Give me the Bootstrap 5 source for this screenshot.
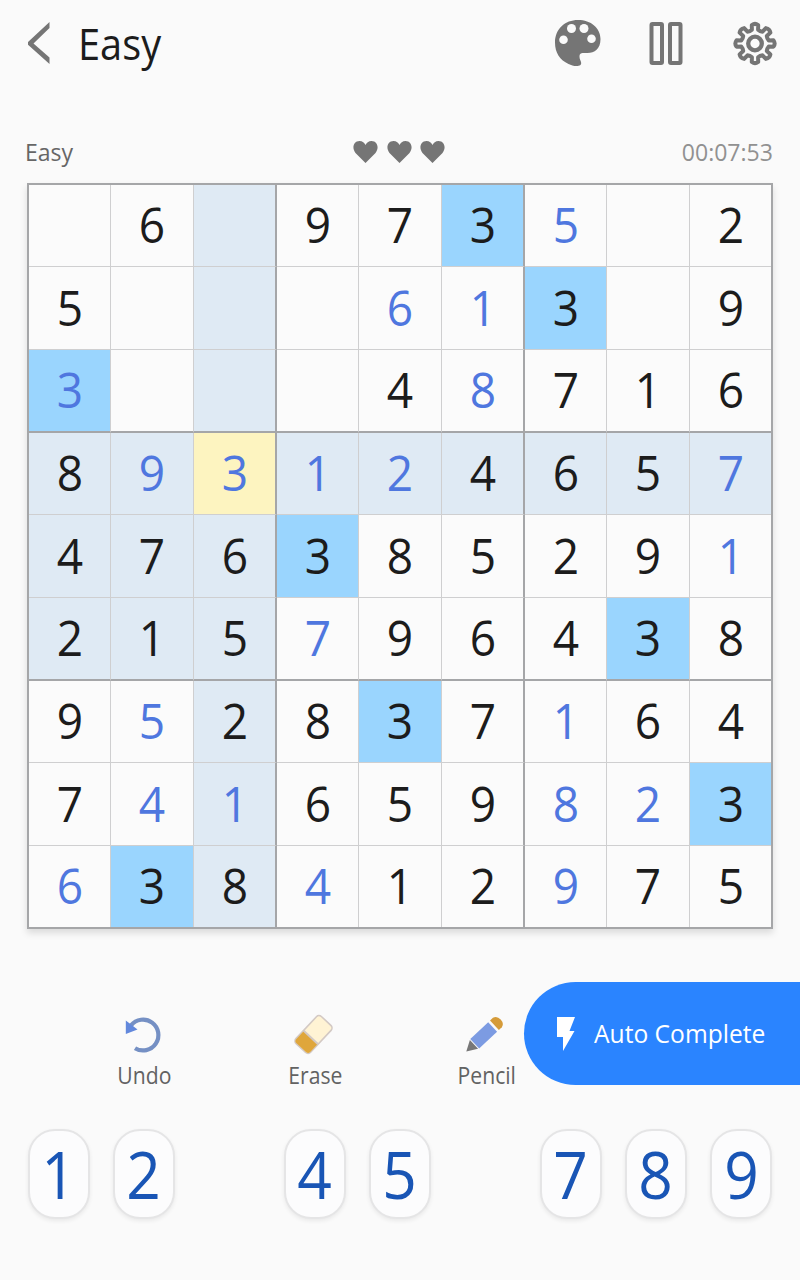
<!DOCTYPE html>
<html lang="en">
<head>
<meta charset="utf-8">
<meta name="viewport" content="width=device-width, initial-scale=1">
<title>Sudoku</title>
<link href="https://cdn.jsdelivr.net/npm/bootstrap@5.3.0/dist/css/bootstrap.min.css" rel="stylesheet">
<style>
  body { background: #fafafa; font-family: "Open Sans", "Noto Sans", sans-serif; font-weight: 380; color: #1c1c1c; width: 800px; height: 1280px; overflow: hidden; }
  svg { display: block; flex: none; }
  .narrow { display: inline-block; white-space: nowrap; transform: scaleX(.94); transform-origin: left center; }
  .topbar { height: 88px; padding: 0 23px 0 27px; }
  .topbar h1 { font-size: 43px; line-height: 60px; font-weight: 400; margin: 0 0 0 24px; }
  .topbar h1 .narrow { transform: scaleX(.925); }
  .actions { gap: 47px; }
  .status { height: 56px; margin-top: 39px; padding: 0 27px 6px 25px; font-size: 24.5px; color: #666; }
  .status .time { color: #919191; transform-origin: right center; }
  .hearts { gap: 7.5px; margin-left: -1px; }
  .board { width: 746px; height: 746px; margin-left: 27px; border: 2px solid #a5a6a8; display: grid;
    grid-template-columns: 82px 83px 83px 82px 83px 83px 82px 83px 81px;
    grid-template-rows: 82px 83px 83px 82px 83px 83px 82px 83px 81px; box-shadow: 0 4px 7px rgba(0,0,0,.13); }
  .cell { border: 0 solid #cfcfd0; border-right-width: 1px; border-bottom-width: 1px; font-size: 48.5px; line-height: 1; background: #fbfbfb; }
  .cell span { transform: scaleX(.95); margin-top: -2px; }
  .cell.box-right { border-right: 2px solid #a5a6a8; }
  .cell.box-bottom { border-bottom: 2px solid #a5a6a8; }
  .cell.last-col { border-right: 0; }
  .cell.last-row { border-bottom: 0; }
  .cell.area { background: #dfeaf4; }
  .cell.same { background: #9ad5fe; }
  .cell.picked { background: #fdf4c0; }
  .cell.entered { color: #4f77df; }
  .tools { height: 200px; padding-left: 59px; }
  .tool { width: 171px; padding-top: 85px; font-size: 23px; line-height: 32px; color: #626262; }
  .tool .narrow { transform: scaleX(.92); transform-origin: center; margin-top: 3px; }
  .auto { right: 0; top: 53px; width: 276px; height: 103px; border-radius: 52px 0 0 52px; background: #2a84ff; color: #fff; font-size: 25.5px; padding-left: 33px; border: 0; }
  .auto .narrow { margin-left: 19px; transform: scaleX(.965); }
  .keys { display: grid; grid-template-columns: repeat(9, 1fr); padding: 0 16px; justify-items: center; }
  .key { width: 62px; height: 90px; border: 2px solid #e5e5e6; border-radius: 27px; background: #fcfcfd; color: #1955b5; font-size: 65px; font-weight: 400; line-height: 1; box-shadow: 0 2px 4px rgba(0,0,0,.07); }
  .key span { transform: scaleX(.93); }
</style>
</head>
<body>
<header class="topbar d-flex align-items-center">
  <svg width="27" height="44" viewBox="0 0 27 44"><path d="M22.500 0v6L6.500 21.500 22.500 35.500v6.500L1 22.800v-2.800Z" fill="#757575"/></svg>
  <h1><span class="narrow">Easy</span></h1>
  <div class="actions d-flex align-items-center ms-auto">
    <svg width="47" height="48" viewBox="0 0 47 48"><path d="M24 0C37 0 46.500 8 46.500 19c0 10-6 14-13 14-5 0-8-.5-8 3.500 0 4 3 6 1 8.500-3 2-8 1-12-1C6 40 1 33 1 22.500 1 9 11 0 24 0Z" fill="#757575"/><g fill="#fafafa"><circle cx="9.500" cy="19.700" r="4.300"/><circle cx="17.500" cy="8.500" r="4.500"/><circle cx="30" cy="8.500" r="4.500"/><circle cx="37.500" cy="18.700" r="4.300"/></g></svg>
    <svg width="36" height="46" viewBox="0 0 36 46"><g fill="none" stroke="#757575" stroke-width="4"><rect x="3.500" y="3" width="10.500" height="39" rx="1"/><rect x="22" y="3" width="10.500" height="39" rx="1"/></g></svg>
    <svg id="gear" width="46" height="46" viewBox="-24 -22.500 46 46"><path fill="none" stroke="#757575" stroke-width="4" stroke-linejoin="round"/><circle r="6.800" fill="none" stroke="#757575" stroke-width="4.300"/></svg>
  </div>
</header>
<div class="status d-flex align-items-center position-relative">
  <span class="narrow">Easy</span>
  <div class="hearts position-absolute start-50 translate-middle-x d-flex">
    <svg width="26" height="24" viewBox="0 0 26 24"><path d="M13 23 3 13C-1 8 1 1 7 1c3 0 5 2 6 4 1-2 3-4 6-4 6 0 8 7 4 12Z" fill="#757575"/></svg>
    <svg width="26" height="24" viewBox="0 0 26 24"><path d="M13 23 3 13C-1 8 1 1 7 1c3 0 5 2 6 4 1-2 3-4 6-4 6 0 8 7 4 12Z" fill="#757575"/></svg>
    <svg width="26" height="24" viewBox="0 0 26 24"><path d="M13 23 3 13C-1 8 1 1 7 1c3 0 5 2 6 4 1-2 3-4 6-4 6 0 8 7 4 12Z" fill="#757575"/></svg>
  </div>
  <span class="narrow time ms-auto">00:07:53</span>
</div>
<main class="board" id="board"></main>
<section class="tools d-flex position-relative">
  <div class="tool d-flex flex-column align-items-center">
    <svg width="44" height="42" viewBox="0 0 44 42"><path d="M8 11.400A15.400 15.400 0 1 1 12 34.200" fill="none" stroke="#7590c4" stroke-width="4.200"/><path d="M2.800 6.500v13.500L14.500 15.500Z" fill="#6288dc"/></svg>
    <span class="narrow">Undo</span>
  </div>
  <div class="tool d-flex flex-column align-items-center">
    <svg width="44" height="42" viewBox="0 0 44 42"><g transform="translate(19.500 20.500) rotate(-47)"><rect x="-18.500" y="-10" width="37" height="20" rx="3.500" fill="#fff3d4" stroke="#d3c9c4" stroke-width="1.600"/><path d="M-4-9.500h-11q-3 0-3 3V6.500q0 3 3 3h11Z" fill="#dfa63b"/><path d="M-4-10V10" stroke="#d3c9c4" stroke-width="2"/></g></svg>
    <span class="narrow">Erase</span>
  </div>
  <div class="tool d-flex flex-column align-items-center">
    <svg width="44" height="42" viewBox="0 0 44 42"><g transform="translate(1.300 37.500) rotate(-43)"><path d="M0 0 10.500-6V6Z" fill="#777"/><rect x="11.500" y="-6.500" width="24.500" height="13" fill="#7c9be2"/><path d="M38.500-6.500h4q4.500 1 4.500 6.500t-4.500 6.500h-4Z" fill="#d59b39"/></g></svg>
    <span class="narrow">Pencil</span>
  </div>
  <button class="auto position-absolute d-flex align-items-center" type="button">
    <svg width="18" height="34" viewBox="0 0 18 34"><path d="M0 0h18l-5.500 14h5L6 34V20H0Z" fill="#fff"/></svg>
    <span class="narrow">Auto Complete</span>
  </button>
</section>
<footer class="keys" id="keys"></footer>
<script src="https://cdn.jsdelivr.net/npm/bootstrap@5.3.0/dist/js/bootstrap.bundle.min.js"></script>
<script>
  // "e" before a digit marks a value entered by the player, "." an empty cell
  const rows = [
    '. 6 . 9 7 3 e5 . 2', '5 . . . e6 e1 3 . 9', 'e3 . . . 4 e8 7 1 6',
    '8 e9 e3 e1 e2 4 6 5 e7', '4 7 6 3 8 5 2 9 e1', '2 1 5 e7 9 6 4 3 8',
    '9 e5 2 8 3 7 e1 6 4', '7 e4 e1 6 5 9 e8 e2 3', 'e6 3 8 e4 1 2 e9 7 5'
  ];
  const board = document.getElementById('board');
  rows.forEach((row, r) => row.split(' ').forEach((v, c) => {
    const el = document.createElement('div');
    const n = v.replace(/[e.]/, '');
    el.className = 'cell d-flex align-items-center justify-content-center';
    if (v[0] === 'e') el.classList.add('entered');
    if (r === 3 && c === 2) el.classList.add('picked');
    else if (n === '3') el.classList.add('same');
    else if (r === 3 || c === 2 || (c < 3 && r > 2 && r < 6)) el.classList.add('area');
    if (c === 8) el.classList.add('last-col'); else if (c % 3 === 2) el.classList.add('box-right');
    if (r === 8) el.classList.add('last-row'); else if (r % 3 === 2) el.classList.add('box-bottom');
    if (n) el.innerHTML = '<span>' + n + '</span>';
    board.append(el);
  }));
  // digits 3 and 6 are already used up
  document.getElementById('keys').innerHTML = [1, 2, 3, 4, 5, 6, 7, 8, 9].map(n =>
    n === 3 || n === 6 ? '<div></div>' : '<div class="key d-flex align-items-center justify-content-center"><span>' + n + '</span></div>').join('');
  // eight rounded teeth around the gear's rim
  let d = '';
  const p = (a, r) => (r * Math.cos(a)).toFixed(1) + ' ' + (r * Math.sin(a)).toFixed(1);
  for (let i = 0; i < 8; i++) {
    const a = i * Math.PI / 4;
    d += (i ? 'L' : 'M') + p(a - .22, 14) + 'L' + p(a - .17, 18.8) + 'Q' + p(a, 20.8) + ' ' + p(a + .17, 18.8) + 'L' + p(a + .22, 14) + 'Q' + p(a + Math.PI / 8, 13) + ' ' + p(a + Math.PI / 4 - .22, 14);
  }
  document.querySelector('#gear path').setAttribute('d', d + 'Z');
</script>
</body>
</html>
